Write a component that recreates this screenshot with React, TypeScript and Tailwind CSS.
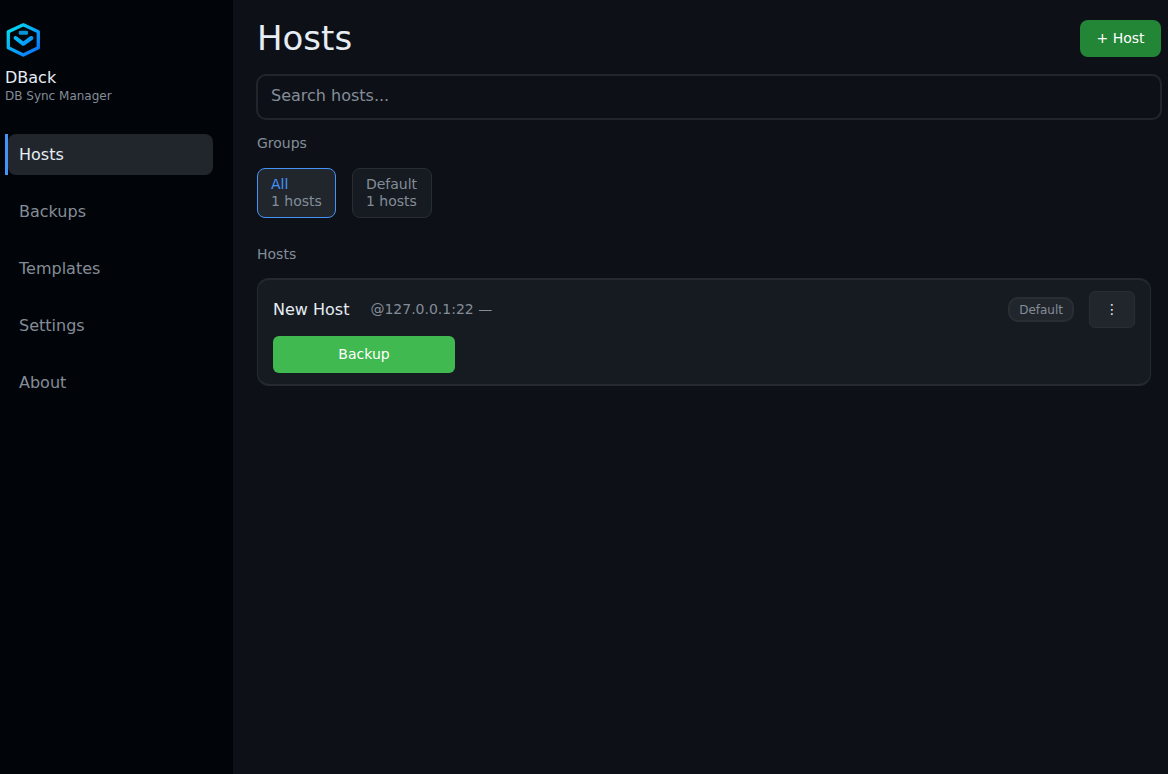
import { useState } from "react";

const pages = ["Hosts", "Backups", "Templates", "Settings", "About"];

const groups = [
  { name: "All", count: 1 },
  { name: "Default", count: 1 },
];

function Logo() {
  return (
    <svg width="36" height="36" viewBox="0 0 36 36" fill="none" aria-hidden="true">
      <defs>
        <linearGradient id="logo" x1="3" y1="3" x2="32" y2="33" gradientUnits="userSpaceOnUse">
          <stop stopColor="#00e5ee" />
          <stop offset="1" stopColor="#0a70ff" />
        </linearGradient>
      </defs>
      <g stroke="url(#logo)" strokeWidth="3.300" strokeLinejoin="round" strokeLinecap="round">
        <path d="M18.300 2.800 L33.300 9.800 V25.800 L18.300 33 L3.300 25.800 V9.800 Z" />
        <path d="M10.600 16 L18.300 21.800 L26.400 16" strokeWidth="4" />
      </g>
      <rect x="13.800" y="8.700" width="9.200" height="4" rx="1.300" fill="#0892d8" />
    </svg>
  );
}

function Sidebar({ page, onSelect }: { page: string; onSelect: (page: string) => void }) {
  return (
    <aside className="w-[233px] shrink-0 bg-[#010409] pt-[22px] pr-5 pl-[5px]">
      <Logo />
      <div className="mt-2.5 text-base leading-5 text-[#e6edf3]">DBack</div>
      <div className="text-xs leading-4 text-[#848d97]">DB Sync Manager</div>
      <nav className="mt-[30px] flex flex-col gap-4">
        {pages.map((name) => (
          <button
            key={name}
            type="button"
            onClick={() => onSelect(name)}
            className={
              name === page
                ? "flex h-[41px] items-stretch text-left text-[#e6edf3]"
                : "flex h-[41px] items-stretch text-left text-[#848d97]"
            }
          >
            <span className={name === page ? "w-[3px] bg-[#4493f8]" : "w-[3px]"} />
            <span
              className={
                name === page
                  ? "flex flex-1 items-center rounded-lg bg-[#21262d] px-[11px]"
                  : "flex flex-1 items-center rounded-lg px-[11px]"
              }
            >
              {name}
            </span>
          </button>
        ))}
      </nav>
    </aside>
  );
}

export default function App() {
  const [page, setPage] = useState("Hosts");
  const [group, setGroup] = useState("All");

  return (
    <div className="flex min-h-screen bg-[#0d1117] font-['DejaVu_Sans',sans-serif] text-base text-[#e6edf3]">
      <Sidebar page={page} onSelect={setPage} />
      <main className="min-w-0 flex-1 pt-5 pr-[6px] pb-6 pl-[23px]">
        <header className="flex h-[37px] items-start justify-between pr-px pl-px">
          <h1 className="text-[34px] leading-9">Hosts</h1>
          <button type="button" className="h-[37px] min-w-[81px] rounded-lg bg-[#238636] px-4 pb-0.5 text-sm text-white">
            + Host
          </button>
        </header>

        <input
          type="text"
          aria-label="Search hosts"
          placeholder="Search hosts..."
          className="mt-[17px] block h-[46px] w-full rounded-[10px] border-2 border-[#21262d] bg-transparent px-[13px] pb-1 outline-none placeholder:text-[#848d97] placeholder:opacity-100"
        />

        <div className="pr-[11px] pl-px">
          <h2 className="mt-[13px] text-sm leading-5 text-[#848d97]">Groups</h2>
          <div className="mt-[15px] flex gap-4">
            {groups.map(({ name, count }) => (
              <button
                key={name}
                type="button"
                onClick={() => setGroup(name)}
                className={
                  name === group
                    ? "h-[50px] rounded-lg border border-[#4493f8] bg-[#21262d] px-[13px] text-left text-sm leading-[17px] text-[#4493f8]"
                    : "h-[50px] min-w-20 rounded-lg border border-[#282d34] bg-[#161b22] px-[13px] text-left text-sm leading-[17px] text-[#848d97]"
                }
              >
                <span className="block">{name}</span>
                <span className="block text-[#848d97]">{count} hosts</span>
              </button>
            ))}
          </div>

          <h2 className="mt-[26px] text-sm leading-5 text-[#848d97]">Hosts</h2>
          <article className="mt-[14px] rounded-xl border-x border-y-2 border-[#252a31] bg-[#161b22] px-[15px] py-[11px]">
            <div className="flex h-[37px] items-center">
              <h3>New Host</h3>
              <span className="ml-[21px] pb-0.5 text-sm text-[#848d97]">@127.0.0.1:22 —</span>
              <span className="ml-auto flex h-[25px] items-center rounded-[10px] border-2 border-[#292e35] bg-[#21262d] px-[9px] text-xs text-[#848d97]">
                Default
              </span>
              <button
                type="button"
                aria-label="Host actions"
                className="ml-[15px] h-[37px] w-[46px] rounded-md border border-[#292e35] bg-[#21262d] pb-0.5 text-sm text-[#e6edf3]"
              >
                ⋮
              </button>
            </div>
            <button type="button" className="mt-2 h-[37px] w-[182px] rounded-md bg-[#3fb950] pb-0.5 text-sm text-white">
              Backup
            </button>
          </article>
        </div>
      </main>
    </div>
  );
}
